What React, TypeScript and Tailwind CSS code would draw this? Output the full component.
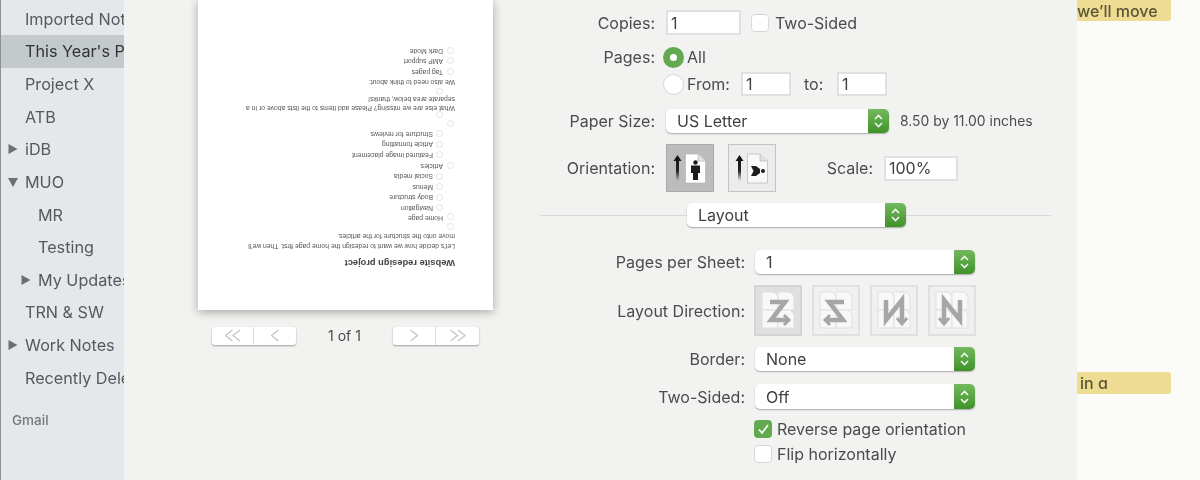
import React from "react";

const sideRows: { t: string; sel?: boolean; arrow?: "r" | "d"; indent?: boolean }[] = [
  { t: "Imported Notes" },
  { t: "This Year's Projects", sel: true },
  { t: "Project X" },
  { t: "ATB" },
  { t: "iDB", arrow: "r" },
  { t: "MUO", arrow: "d" },
  { t: "MR", indent: true },
  { t: "Testing", indent: true },
  { t: "My Updates", arrow: "r", indent: true },
  { t: "TRN & SW" },
  { t: "Work Notes", arrow: "r" },
  { t: "Recently Deleted" },
];

function Tri({ d }: { d: "r" | "d" }) {
  return (
    <svg width="12" height="12" viewBox="0 0 12 12" className="shrink-0">
      <path d={d === "r" ? "M1.5 1 L10.5 6 L1.5 11 Z" : "M1 2 L11 2 L6 11 Z"} fill="#6d7073" />
    </svg>
  );
}

function Sidebar() {
  return (
    <div className="w-[124px] shrink-0 h-full bg-[#e5e8eb] border-l border-[#8d9196] pt-[2.5px] overflow-hidden whitespace-nowrap text-[16.2px] text-[#55585c]">
      {sideRows.map((r) => (
        <div
          key={r.t}
          className={`h-[32.65px] flex items-center relative ${r.sel ? "bg-[#c4c9cc] text-[#303438]" : ""} ${r.indent ? "pl-[37px]" : "pl-[24px]"}`}
        >
          {r.arrow && (
            <span className={`absolute top-[10px] ${r.indent ? "left-[19px]" : "left-[6px]"}`}>
              <Tri d={r.arrow} />
            </span>
          )}
          {r.t}
        </div>
      ))}
      <div className="pl-[11px] mt-[16px] text-[13.5px] font-medium text-[#75787c]">Gmail</div>
    </div>
  );
}

function Dot({ cls }: { cls: string }) {
  return <span className={`absolute w-[7px] h-[7px] rounded-full border border-[#e2e2e2] ${cls}`} />;
}

function PRow({ h, pad, dot, t }: { h: string; pad?: string; dot?: string; t?: string }) {
  return (
    <div className={`relative flex items-center ${h} ${pad ?? ""}`}>
      {dot && <Dot cls={dot} />}
      {t && <span>{t}</span>}
    </div>
  );
}

function Paper() {
  const L1 = "pl-[50px]";
  const L2 = "pl-[60px]";
  const d1 = "left-[39px]";
  const d2 = "left-[50px]";
  return (
    <div className="w-[295px] h-[310px] bg-white shadow-[0_2px_9px_rgba(0,0,0,0.32)] shrink-0 overflow-hidden">
      <div className="rotate-180 w-full h-full pl-[38px] pt-[40px] font-['Liberation_Sans',sans-serif] text-[6.8px] text-[#555] whitespace-nowrap">
        <div className="h-[14px] leading-[14px] text-[9.3px] font-bold text-[#444]">Website redesign project</div>
        <div className="mt-[5px] h-[10px] leading-[10px]">Let's decide how we want to redesign the home page first. Then we'll</div>
        <div className="h-[10px] leading-[10px]">move onto the structure for the articles.</div>
        <div className="-ml-[38px]">
          <PRow h="h-[8px]" dot="left-[39px] top-px" />
          <PRow h="h-[9.7px]" pad={L1} dot={`${d1} top-[3px]`} t="Home page" />
          <PRow h="h-[10.7px]" pad={L2} dot={`${d2} top-[2px]`} t="Navigation" />
          <PRow h="h-[10.7px]" pad={L2} dot={`${d2} top-[2px]`} t="Body structure" />
          <PRow h="h-[10.3px]" pad={L2} dot={`${d2} top-[2px]`} t="Menus" />
          <PRow h="h-[10.7px]" pad={L2} dot={`${d2} top-[2px]`} t="Social media" />
          <PRow h="h-[10.7px]" pad={L1} dot={`${d1} top-[2px]`} t="Articles" />
          <PRow h="h-[10.7px]" pad={L2} dot={`${d2} top-[2px]`} t="Featured image placement" />
          <PRow h="h-[10.5px]" pad={L2} dot={`${d2} top-[2px]`} t="Article formatting" />
          <PRow h="h-[10.5px]" pad={L2} dot={`${d2} top-[2px]`} t="Structure for reviews" />
          <PRow h="h-[10px]" dot={`${d1} top-[2px]`} />
          <PRow h="h-[6px]" dot={`${d2} top-px`} />
          <div className="h-[9px] leading-[9px] pl-[38px]">What else are we missing? Please add items to the lists above or in a</div>
          <div className="h-[9px] leading-[9px] pl-[38px]">separate area below, thanks!</div>
          <PRow h="h-[7px]" dot={`${d2} top-0`} />
          <div className="h-[11px] leading-[11px] pl-[38px]">We also need to think about:</div>
          <PRow h="h-[10.3px]" pad={L1} dot={`${d1} top-[2px]`} t="Tag pages" />
          <PRow h="h-[10.7px]" pad={L1} dot={`${d1} top-[2px]`} t="AMP support" />
          <PRow h="h-[10.3px]" pad={L1} dot={`${d1} top-[2px]`} t="Dark Mode" />
        </div>
      </div>
    </div>
  );
}

function Chev({ d, n }: { d: "l" | "r"; n: 1 | 2 }) {
  const p = d === "l" ? (x: number) => `M${x + 7} 1 L${x} 6.5 L${x + 7} 12` : (x: number) => `M${x} 1 L${x + 7} 6.5 L${x} 12`;
  return (
    <svg width={n === 2 ? 16 : 8} height="13" viewBox={n === 2 ? "0 0 16 13" : "0 0 8 13"} fill="none" stroke="#c4c4c4" strokeWidth="1.3">
      <path d={p(0.5)} />
      {n === 2 && <path d={p(8)} />}
    </svg>
  );
}

function PagerGroup({ children, w }: { children: React.ReactNode; w: string }) {
  return (
    <div className={`h-[18px] ${w} flex bg-white rounded-[3px] shadow-[0_1px_2px_rgba(0,0,0,0.35)] divide-x divide-[#dddddd]`}>
      {children}
    </div>
  );
}

function Preview() {
  return (
    <div className="w-[416px] shrink-0 pl-[74px]">
      <Paper />
      <div className="flex items-center mt-[15px] w-[295px]">
        <div className="ml-[14px]">
          <PagerGroup w="w-[84px]">
            <div className="w-[42px] flex items-center justify-center"><Chev d="l" n={2} /></div>
            <div className="w-[42px] flex items-center justify-center"><Chev d="l" n={1} /></div>
          </PagerGroup>
        </div>
        <div className="w-[97px] text-center text-[14px] text-[#4a4a4a]">1 of 1</div>
        <PagerGroup w="w-[86px]">
          <div className="w-[43px] flex items-center justify-center"><Chev d="r" n={1} /></div>
          <div className="w-[43px] flex items-center justify-center"><Chev d="r" n={2} /></div>
        </PagerGroup>
      </div>
    </div>
  );
}

function Stepper() {
  return (
    <div className="w-[21px] h-full shrink-0 rounded-r-[5px] bg-gradient-to-b from-[#74b95e] to-[#3f9129] flex items-center justify-center">
      <svg width="11" height="16" viewBox="0 0 11 16" fill="none" stroke="#f2f7ee" strokeWidth="1.6">
        <path d="M2 6 L5.5 2.5 L9 6" />
        <path d="M2 10 L5.5 13.5 L9 10" />
      </svg>
    </div>
  );
}

function Select({ t, w, h = "h-[24px]" }: { t: string; w: string; h?: string }) {
  return (
    <div className={`${w} ${h} shrink-0 flex items-center bg-white rounded-[5px] shadow-[0_1px_1.5px_rgba(0,0,0,0.3)] text-[#3f3f41]`}>
      <span className="flex-1 pl-[11px]">{t}</span>
      <Stepper />
    </div>
  );
}

function Field({ t, w, h = "h-[25px]" }: { t: string; w: string; h?: string }) {
  return (
    <div className={`${w} ${h} shrink-0 flex items-center bg-white border-2 border-[#e0e0e0] pl-[3px] text-[#404042]`}>{t}</div>
  );
}

function Check({ on }: { on?: boolean }) {
  return on ? (
    <div className="w-[18px] h-[18px] shrink-0 rounded-[4px] bg-[#62a94f] flex items-center justify-center">
      <svg width="13" height="12" viewBox="0 0 13 12" fill="none" stroke="#fff" strokeWidth="1.7">
        <path d="M2 6.5 L5 10 L11 2" />
      </svg>
    </div>
  ) : (
    <div className="w-[18px] h-[18px] shrink-0 rounded-[4px] bg-white border border-[#d8d8d8]" />
  );
}

function Radio({ on }: { on?: boolean }) {
  return on ? (
    <div className="w-[21px] h-[21px] shrink-0 rounded-full bg-[#62a94f] flex items-center justify-center">
      <div className="w-[7px] h-[7px] rounded-full bg-white" />
    </div>
  ) : (
    <div className="w-[21px] h-[21px] shrink-0 rounded-full bg-white border border-[#d4d4d4]" />
  );
}

function Page({ x, y }: { x: number; y: number }) {
  return (
    <path d={`M${x} ${y} h12 l4 4 v14 h-16 Z`} fill="#f8f8f8" stroke="#dfdfdf" strokeWidth="1" />
  );
}

function Orient({ sel, land }: { sel?: boolean; land?: boolean }) {
  const gid = sel ? "arrowA" : "arrowB";
  return (
    <div className={`w-[48px] h-[48px] shrink-0 border ${sel ? "bg-[#bcbcbc] border-[#aaaaaa]" : "bg-[#ececec] border-[#c4c4c4]"}`}>
      <svg width="46" height="46" viewBox="0 0 46 46">
        <defs>
          <linearGradient id={gid} x1="0" y1="0" x2="0" y2="1">
            <stop offset="0" stopColor="#111" />
            <stop offset="0.6" stopColor="#222" />
            <stop offset="1" stopColor="#222" stopOpacity="0" />
          </linearGradient>
        </defs>
        <path d="M10.5 10 L14.5 16 H12 V36 H9 V16 H6.5 Z" fill={`url(#${gid})`} />
        <path d="M18.5 9 H31 L38.5 16 V38 H18.5 Z" fill={sel ? "#fff" : "#f9f9f9"} stroke="#b5b5b5" strokeWidth="0.7" />
        <path d="M31 9 V16 H38.5" fill="#e2e2e2" stroke="#b5b5b5" strokeWidth="0.7" />
        {land ? (
          <g fill="#1c1c1c">
            <path d="M22 21 H27 L31 24 V28 L27 31 H22 L24.5 26 Z" />
            <circle cx="34" cy="26" r="2" />
          </g>
        ) : (
          <g fill="#1c1c1c">
            <circle cx="28.5" cy="17.5" r="2.2" />
            <path d="M24 20.5 H33 V28 H31 V35 H26 V28 H24 Z" />
          </g>
        )}
      </svg>
    </div>
  );
}

function Dir({ sel, path, head }: { sel?: boolean; path: string; head: string }) {
  return (
    <div className={`w-[48px] h-[51px] shrink-0 border-2 ${sel ? "bg-[#dfdfdf] border-[#d4d4d4]" : "bg-[#f0f0f0] border-[#e0e0e0]"}`}>
      <svg width="44" height="47" viewBox="0 0 44 47">
        <Page x={6} y={5} />
        <Page x={22} y={5} />
        <Page x={6} y={23} />
        <Page x={22} y={23} />
        <path d={path} fill="none" stroke="#a6a6a6" strokeWidth="4.5" />
        <path d={head} fill="none" stroke="#a6a6a6" strokeWidth="3" />
      </svg>
    </div>
  );
}

function Label({ t, w }: { t: string; w: string }) {
  return <div className={`${w} shrink-0 text-right text-[#4a4b4d]`}>{t}</div>;
}

function Form() {
  const U = "w-[115px]";
  const D = "w-[205px]";
  return (
    <div className="flex-1 pt-[10px] text-[16px] text-[#4a4b4d] whitespace-nowrap">
      <div className="flex items-center h-[25px]">
        <Label t="Copies:" w={U} />
        <div className="ml-[11px]"><Field t="1" w="w-[75px]" /></div>
        <div className="ml-[10px]"><Check /></div>
        <span className="ml-[6px]">Two-Sided</span>
      </div>
      <div className="flex items-center h-[24px] mt-[10px]">
        <Label t="Pages:" w={U} />
        <div className="ml-[8px]"><Radio on /></div>
        <span className="ml-[3px]">All</span>
      </div>
      <div className="flex items-center h-[24px] mt-[3px]">
        <div className={`${U} shrink-0`} />
        <div className="ml-[8px]"><Radio /></div>
        <span className="ml-[3px] w-[43px]">From:</span>
        <div className="ml-[11px]"><Field t="1" w="w-[50px]" h="h-[24px]" /></div>
        <span className="ml-[13px] w-[20px]">to:</span>
        <div className="ml-[13px]"><Field t="1" w="w-[50px]" h="h-[24px]" /></div>
      </div>
      <div className="flex items-center h-[24px] mt-[13px]">
        <Label t="Paper Size:" w={U} />
        <div className="ml-[11px]"><Select t="US Letter" w="w-[223px]" /></div>
        <span className="ml-[11px] text-[13.9px]">8.50 by 11.00 inches</span>
      </div>
      <div className="flex items-center h-[48px] mt-[11px]">
        <Label t="Orientation:" w={U} />
        <div className="ml-[11px]"><Orient sel /></div>
        <div className="ml-[14px]"><Orient land /></div>
        <Label t="Scale:" w="w-[97px]" />
        <div className="ml-[11px]"><Field t="100%" w="w-[74px]" /></div>
      </div>
      <div className="flex items-center h-[24px] mt-[11px] pr-[26px]">
        <div className="w-[147px] h-px bg-[#d9d9d9]" />
        <Select t="Layout" w="w-[219px]" />
        <div className="flex-1 h-px bg-[#d9d9d9]" />
      </div>
      <div className="flex items-center h-[24px] mt-[23px]">
        <Label t="Pages per Sheet:" w={D} />
        <div className="ml-[10px]"><Select t="1" w="w-[220px]" /></div>
      </div>
      <div className="flex items-center h-[51px] mt-[11px]">
        <Label t="Layout Direction:" w={D} />
        <div className="ml-[9px] flex gap-[10px]">
          <Dir sel path="M14 15 H29 L15 33 H31" head="M28 28 L33 33 L28 38" />
          <Dir path="M30 15 H15 L29 33 H13" head="M16 28 L11 33 L16 38" />
          <Dir path="M14 13 V33 L30 13 V36" head="M25 31 L30 37 L35 31" />
          <Dir path="M30 13 V33 L14 13 V36" head="M9 31 L14 37 L19 31" />
        </div>
      </div>
      <div className="flex items-center h-[24px] mt-[11px]">
        <Label t="Border:" w={D} />
        <div className="ml-[10px]"><Select t="None" w="w-[220px]" /></div>
      </div>
      <div className="flex items-center h-[25px] mt-[13px]">
        <Label t="Two-Sided:" w={D} />
        <div className="ml-[10px]"><Select t="Off" w="w-[220px]" h="h-[25px]" /></div>
      </div>
      <div className="flex items-center h-[18px] mt-[11px] pl-[214px]">
        <Check on />
        <span className="ml-[5px]">Reverse page orientation</span>
      </div>
      <div className="flex items-center h-[18px] mt-[7px] pl-[214px]">
        <Check />
        <span className="ml-[5px]">Flip horizontally</span>
      </div>
    </div>
  );
}

function Notes() {
  return (
    <div className="flex-1 h-full bg-[#fbfbf8] text-[16px] font-medium text-[#5b5636] whitespace-nowrap [font-feature-settings:'cv11']">
      <div className="h-[21px] w-[94px] bg-[#efdc93] rounded-br-[3px] flex items-center">we’ll move</div>
      <div className="h-[22px] w-[94px] mt-[351px] pl-[3px] bg-[#efdc93] rounded-r-[3px] flex items-center">in a</div>
    </div>
  );
}

export default function App() {
  return (
    <div className="w-[1200px] h-[480px] overflow-hidden flex bg-[#f2f2f1] blur-[0.35px] font-['Inter','Liberation_Sans',sans-serif]">
      <Sidebar />
      <div className="w-[953px] h-full shrink-0 flex bg-[#f2f2f1]">
        <Preview />
        <Form />
      </div>
      <Notes />
    </div>
  );
}
